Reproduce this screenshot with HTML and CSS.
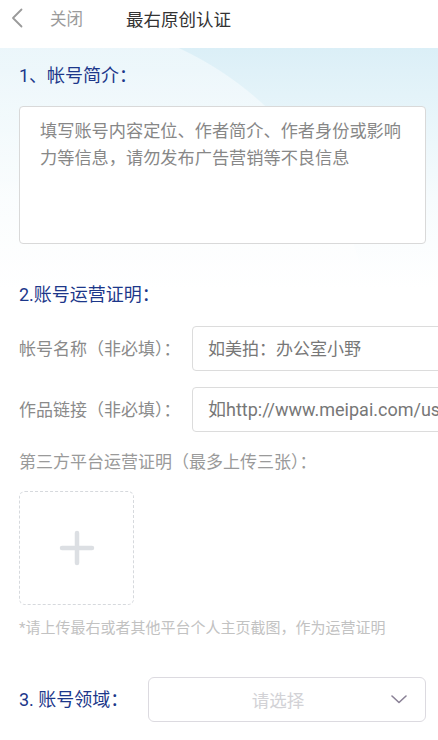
FILE: index.html
```html
<!DOCTYPE html>
<html lang="zh-CN">
<head>
<meta charset="utf-8">
<title>最右原创认证</title>
<link rel="stylesheet" href="styles.css">
</head>
<body>
<header class="topbar">
  <span class="back">
    <svg width="12" height="20" viewBox="0 0 12 20"><path d="M10.5 1.5 L2 10 L10.5 18.5" fill="none" stroke="#9a9a9a" stroke-width="1.8" stroke-linecap="round" stroke-linejoin="round"/></svg>
  </span>
  <span class="close">关闭</span>
  <span class="title">最右原创认证</span>
</header>
<main class="content">
  <h2 class="section-title">1、帐号简介：</h2>
  <textarea class="intro" placeholder="填写账号内容定位、作者简介、作者身份或影响力等信息，请勿发布广告营销等不良信息"></textarea>

  <h2 class="section-title sec2">2.账号运营证明：</h2>
  <div class="field-row">
    <label class="field-label">帐号名称（非必填）：</label>
    <input class="field-input" type="text" placeholder="如美拍：办公室小野">
  </div>
  <div class="field-row row2">
    <label class="field-label">作品链接（非必填）：</label>
    <input class="field-input field-input--url" type="text" placeholder="如http://www.meipai.com/user/123456">
  </div>
  <p class="upload-label">第三方平台运营证明（最多上传三张）：</p>
  <div class="upload-box">
    <svg width="36" height="36" viewBox="0 0 36 36"><path d="M18 3 V33 M3 18 H33" stroke="#dcdfe3" stroke-width="4.5" stroke-linecap="round"/></svg>
  </div>
  <p class="note">*请上传最右或者其他平台个人主页截图，作为运营证明</p>

  <div class="domain-row">
    <h2 class="section-title domain-title">3. 账号领域：</h2>
    <div class="select">
      <span class="select-text">请选择</span>
      <svg class="chev" width="16" height="9" viewBox="0 0 16 9"><path d="M1 1 L8 7.5 L15 1" fill="none" stroke="#8a8196" stroke-width="1.6" stroke-linecap="round" stroke-linejoin="round"/></svg>
    </div>
  </div>
</main>
</body>
</html>
```

FILE: styles.css
```css
* { box-sizing: border-box; }
html, body {
  margin: 0;
  padding: 0;
  width: 438px;
  overflow-x: hidden;
  background: #fff;
  font-family: Roboto, "Noto Sans CJK SC", sans-serif;
}
.topbar {
  height: 48px;
  display: flex;
  align-items: center;
  padding-left: 11px;
  padding-bottom: 12px;
  background: #fff;
}
.back { display: flex; width: 12px; height: 20px; }
.close {
  margin-left: 27px;
  font-size: 16.5px;
  color: #9b9b9b;
}
.title {
  margin-left: 43px;
  font-size: 17.5px;
  color: #333;
}
.content {
  padding: 16px 12px 40px 19px;
  min-height: 692px;
  background:
    radial-gradient(circle at 40px 300px, rgba(255,255,255,0.45) 0, rgba(255,255,255,0.45) 330px, rgba(255,255,255,0) 331px),
    linear-gradient(to bottom, #dbeff7 0, #e8f5fa 70px, #f6fbfd 150px, #fff 240px);
  background-repeat: no-repeat;
}
.section-title {
  margin: 0;
  font-size: 18px;
  font-weight: normal;
  line-height: 24px;
  color: #1c378a;
}
.intro {
  display: block;
  margin-top: 18px;
  width: 407px;
  height: 138px;
  border: 1px solid #d9d9d9;
  border-radius: 4px;
  background: #fff;
  padding: 11px 12px 0 20px;
  font-family: Roboto, "Noto Sans CJK SC", sans-serif;
  font-size: 17.2px;
  line-height: 27px;
  color: #333;
  resize: none;
  outline: none;
}
.intro::placeholder { color: #878787; }
.sec2 { margin-top: 39px; }
.field-row {
  display: flex;
  align-items: center;
  margin-top: 19px;
}
.row2 { margin-top: 16px; }
.field-label {
  flex: none;
  width: 173px;
  font-size: 17px;
  line-height: 24px;
  color: #8a8a8a;
  white-space: nowrap;
}
.field-input {
  flex: none;
  width: 280px;
  height: 45px;
  border: 1px solid #dcdcdc;
  border-radius: 4px;
  background: #fff;
  padding: 0 0 0 15px;
  font-family: Roboto, "Noto Sans CJK SC", sans-serif;
  font-size: 17px;
  color: #333;
  outline: none;
}
.field-input--url { font-size: 18px; }
.field-input::placeholder { color: #777; }
.upload-label {
  margin: 18px 0 0;
  font-size: 17px;
  line-height: 24px;
  color: #9a9a9a;
  white-space: nowrap;
}
.upload-box {
  margin-top: 17px;
  width: 115px;
  height: 114px;
  border: 1px dashed #d6d9dd;
  border-radius: 6px;
  background: #fff;
  display: flex;
  align-items: center;
  justify-content: center;
}
.note {
  margin: 13px 0 0;
  font-size: 15px;
  line-height: 20px;
  color: #c2c2c2;
  white-space: nowrap;
}
.domain-row {
  display: flex;
  align-items: center;
  margin-top: 39px;
}
.domain-title { flex: none; width: 129px; }
.select {
  width: 278px;
  height: 45px;
  border: 1px solid #dcdae0;
  border-radius: 6px;
  background: #fff;
  display: flex;
  align-items: center;
  padding-left: 16px;
  padding-right: 18px;
}
.select-text {
  flex: 1;
  text-align: center;
  font-size: 17.5px;
  color: #d2d2d6;
}
.chev { flex: none; }
```
